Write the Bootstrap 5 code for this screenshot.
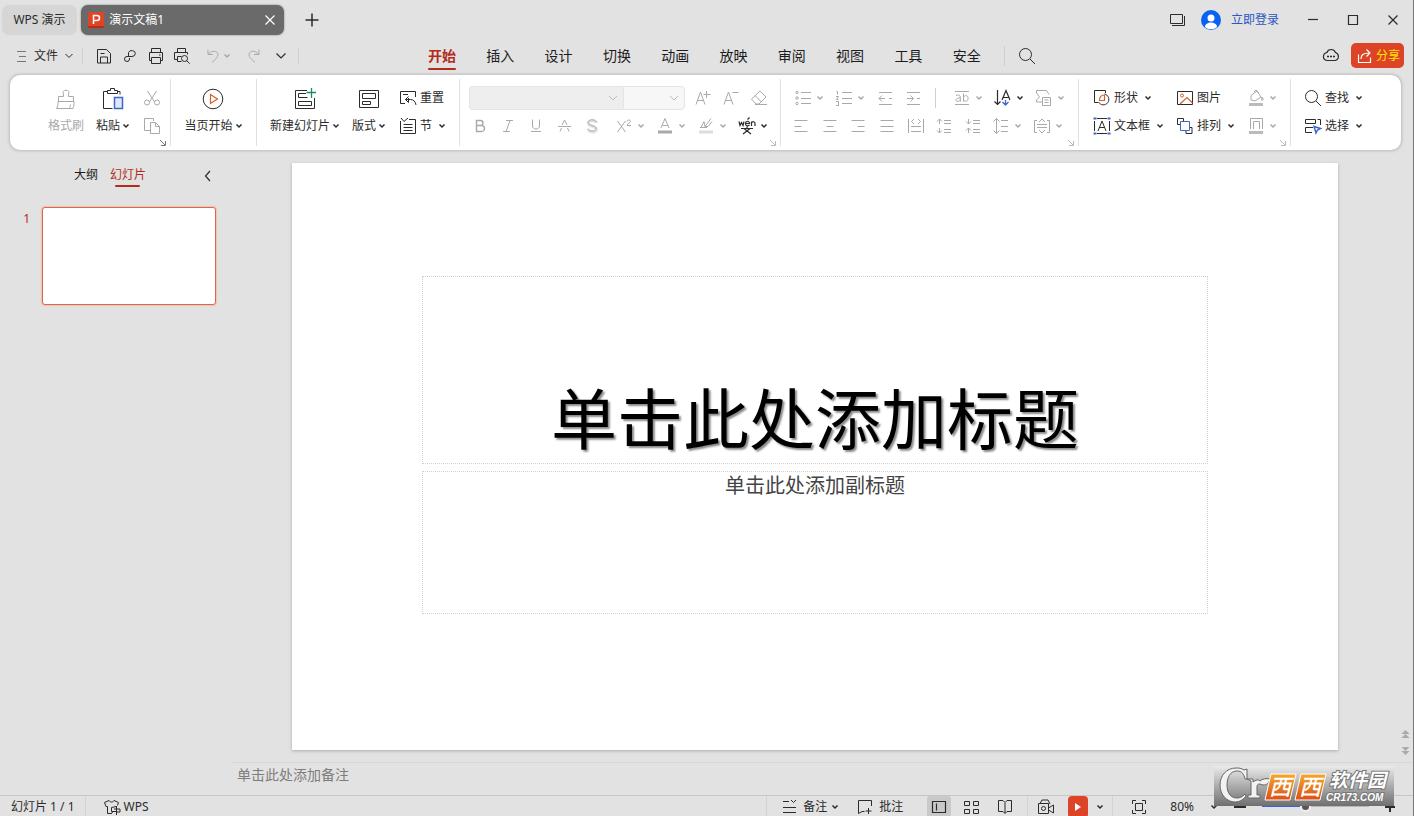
<!DOCTYPE html>
<html lang="zh-CN">
<head>
<meta charset="utf-8">
<meta name="viewport" content="width=device-width, initial-scale=1">
<title>WPS 演示</title>
<link href="https://cdn.jsdelivr.net/npm/bootstrap@5.3.0/dist/css/bootstrap.min.css" rel="stylesheet">
<style>
:root{--red:#b42b1a;--ink:#2b2b2b;--off:#a9a9a9;--face:#e2e2e2}
body{background:var(--face);color:#1c1c1c;font:12px/16px "Noto Sans","Noto Sans CJK SC",sans-serif;border-right:1px solid #777}
button,select{font:inherit}
a{color:inherit;text-decoration:none}
svg{flex:none;fill:none;stroke:currentColor;stroke-width:1}
.ic{width:20px;height:20px}
.cr{width:8px;height:8px;stroke-width:1.5}
.tb{display:inline-flex;align-items:center;justify-content:center;border:0;background:none;padding:0;color:var(--ink);height:28px;flex:none;white-space:nowrap}
.w26{width:26px}.w28{width:28px}.w40{width:40px}
.split{width:41px;justify-content:flex-start;gap:3px;padding-left:4px}
.off{color:var(--off)}
.line{width:1px;background:#cfcfcf;flex:none}
.h16{height:16px}.h20{height:20px}
.titlebar{height:40px;gap:4px;padding-left:2px}
.wtab{height:30px;border-radius:7px;background:#d6d6d6}
.wtab-home{width:75px}
.wtab-on{width:203px;background:#6a6a6a;color:#fff;box-shadow:0 0 2px #777;padding-left:7px}
.plus{margin-left:10px}
.login{color:#2b56c5;gap:10px;margin:0 10px 0 6px}
.menurow{height:30px;padding-top:1px;margin-bottom:2px}
.quick{width:413px}
.file{gap:6px}
.mtabs{width:583px}
.mtab{flex:1;height:28px;font-size:14px;line-height:20px;padding:4px 15px 0}
.mtab.on{color:var(--red);font-weight:700}
.mtab.on::after{content:"";display:block;height:2px;margin-top:2px;background:var(--red);border-radius:1px}
.share{width:53px;height:25px;border-radius:5px;background:#dd4327;color:#ffe600;gap:1px;margin:0 9px 0 6px}
.share svg{color:#fff}
.ribbon{margin:3px 12px 0 10px;height:75px;border-radius:10px;background:#fff;box-shadow:0 0 3px 1px #bbb}
.grp{position:relative;margin:4px 0;padding-top:5px;border-right:1px solid #e0e0e0;flex:none}
.grp:last-child{border:0}
.g1{width:161px;padding-left:38px}.g2{width:86px}.g3{width:203px;padding-left:13px}.g4{width:321px}.g5{width:298px}.g6{width:212px;padding-left:13px}.g7{padding-left:12px}
.fontrow{padding-left:9px}.pad6{padding-left:6px}
.aligns{width:200px}
.launch{position:absolute;right:3px;bottom:-1px;width:8px;height:8px;color:#777}
.launch.off{color:#bbb}
.big{display:inline-flex;flex-direction:column;align-items:center;height:56px;border:0;background:none;padding:0;color:var(--ink);white-space:nowrap}
.big>svg{width:22px;height:22px;margin:4px 0 2px}
.big>span{height:28px;display:flex;align-items:center;gap:2px}
.big.off{color:var(--off)}
.lab{justify-content:flex-start;gap:4px}
.tight{gap:2px}
.c1{width:83px}.c2{width:67px}
.combo{height:24px;border:1px solid #e4e4e4;border-radius:0 4px 4px 0;background:#f7f7f7 url("data:image/svg+xml,%3Csvg xmlns='http://www.w3.org/2000/svg' width='10' height='6'%3E%3Cpath d='M1 1l4 4 4-4' fill='none' stroke='%23bbb'/%3E%3C/svg%3E") no-repeat right 5px center;appearance:none;width:62px;opacity:1}
.combo.face{width:154px;border-radius:4px 0 0 4px;background-color:#eee;border-right:0}
.side{width:231px}
.sidehead{margin-top:17px;padding:0 9px 0 74px}
.stab{height:20px}
.stab.on{color:var(--red);margin-left:12px}
.stab.on::after{content:"";display:block;height:2px;margin:2px 6px 0 5px;background:var(--red);border-radius:1px}
.snum{width:42px;padding:4px 12px 0 0;color:var(--red)}
.thumb{width:174px;height:98px;border:1px solid #d9694a;border-radius:3px;background:#fff;box-shadow:0 0 1px 1px #edc4b6}
.slide{margin:13px 75px 12px 61px;padding:113px 130px 136px;background:#fff;box-shadow:0 1px 3px #aaa}
.ph{border:1px dotted #d2d2d2}
.ph-title{flex:188 1 0;font-size:66px;line-height:90px;color:#000;text-shadow:2px 2px 2px #8a8a8a}
.ph-sub{flex:143 1 0;font-size:20px;line-height:28px;color:#444;margin-top:7px}
.notes{height:33px;margin-left:231px;border-top:1px solid #d6d6d6;color:#7d7d7d;font-size:14px;line-height:24px;padding-left:6px}
.pager{position:absolute;right:3px;bottom:6px}
.status{height:21px;border-top:1px solid #c6c6c6}
.status .tb{height:22px}
.status .line{background:#d3d3d3}
.page{margin:0 10px 0 11px}
.view-on{width:24px;background:#c9c9c9;border-radius:3px 3px 0 0}
.views{gap:6px}
.play{width:20px;background:#dd4327;color:#fff;border-radius:4px}
.pct{gap:16px;margin-left:17px}
.zoombar{appearance:none;width:107px;height:12px;background:linear-gradient(90deg,#3b63d8 40%,#b8b8b8 40%) center/100% 2px no-repeat;margin:0}
.zoombar::-webkit-slider-thumb{appearance:none;width:11px;height:11px;border-radius:50%;background:#555;border:2px solid #eee}
.zin{margin:0 18px 0 16px}
.wmark{position:absolute;right:19px;bottom:10px;width:180px;height:40px;z-index:3}
.wmark text{stroke:none}
.wmark .edge{paint-order:stroke;stroke:#777;stroke-width:2px}
</style>
</head>
<body class="vh-100 overflow-hidden d-flex flex-column position-relative">
<svg class="d-none">
<symbol id="c" viewBox="0 0 8 8"><path d="M1.5 2.5L4 5l2.5-2.5"/></symbol>
<symbol id="launch" viewBox="0 0 8 8"><path d="M1 1l5 5M6.5 2v4.5H2"/></symbol>
<symbol id="save" viewBox="0 0 20 20"><path d="M3.500 3.500h9l4 4v9.500h-13zM6.500 17v-6h7v6M6.500 7.500h4"/></symbol>
<symbol id="pdf" viewBox="0 0 20 20"><path d="M8.500 11V6.500a3.500 3 0 1 1 3.500 4H7a2.500 2.500 0 1 0 2.500 2.500v-1"/></symbol>
<symbol id="print" viewBox="0 0 20 20"><path d="M5.500 6.500v-4h9v4M5.500 14.500h-2v-8h13v8h-2M5.500 11.500h9v6h-9zM13 9h1.500"/></symbol>
<symbol id="prev" viewBox="0 0 20 20"><path d="M5.500 6.500v-4h8v4M5.500 13.500h-3v-7h13v2M5.500 10.500h4M5.500 10.500v5h4"/><circle cx="12.500" cy="12.500" r="3"/><path d="M14.700 14.700l3 3"/></symbol>
<symbol id="undo" viewBox="0 0 20 20"><path d="M5 3.500v5h5M5.500 8c3-4 9-3.500 9.500.5 0 3-3 5-6 8"/></symbol>
<symbol id="redo" viewBox="0 0 20 20"><path d="M15 3.500v5h-5M14.500 8c-3-4-9-3.500-9.500.5 0 3 3 5 6 8"/></symbol>
<symbol id="search" viewBox="0 0 20 20"><circle cx="8.500" cy="8.500" r="6"/><path d="M13 13l5 5"/></symbol>
<symbol id="brush" viewBox="0 0 22 22"><path d="M1.500 20.500c1.500-2 1.500-4 1.500-7h16c0 3 0 4-1 7zM3.500 13V8.500h5V6c-3-5 8-5 5 0v2.500h5V13M13.500 20.500c1.500-1 2-2 2-4"/></symbol>
<symbol id="paste" viewBox="0 0 22 22"><path d="M5 3.500H1.500v17h9M15 3.500h3v3M5.500 5.500v-3h3v-2h4v2h3v3z"/><path d="M12.500 9.500h8v11h-8z" fill="#dfe8fb" stroke="#3f66c8" stroke-width="1.500"/></symbol>
<symbol id="cut" viewBox="0 0 20 20"><path d="M5.500 3l7 11M14.500 3l-7 11"/><circle cx="5" cy="14.500" r="2.500"/><circle cx="15" cy="14.500" r="2.500"/></symbol>
<symbol id="copy" viewBox="0 0 20 20"><path d="M8 14.500H2.500v-12h9V5M8.500 6.500h5l4 4v7h-9zM13.500 6.500v4h4"/></symbol>
<symbol id="start" viewBox="0 0 22 22"><circle cx="11" cy="11" r="9.800"/><path d="M8.500 6.500l7 4.500-7 4.500z" stroke="#d4602b" stroke-width="1.200"/></symbol>
<symbol id="new" viewBox="0 0 22 22"><path d="M13 2.500H1.500v18h19V10M12 5.500H4.500v4h9M4.500 13.500h13v4h-13z"/><path d="M17.500 0v10M12.500 4.500h10" stroke="#1e8c62" stroke-width="1.300"/></symbol>
<symbol id="layout" viewBox="0 0 22 22"><path d="M1.500 2.500h19v17h-19zM4.500 5.500h13v5h-13zM4.500 13.500h8v3h-8z"/></symbol>
<symbol id="reset" viewBox="0 0 20 20"><path d="M7 15.500H2.500v-12h15V9M5 6.500h5M10.500 10v4.500M7.500 11.500h5c3 0 5 2 5.500 5.500M10.500 8.500l-3 3 3 3"/></symbol>
<symbol id="sect" viewBox="0 0 20 20"><path d="M2.500 5v12.500h15v-14H11M3 2l3 3.500L10 2M5.500 8.500h9M5.500 11.500h9M5.500 14.500h9"/></symbol>
<symbol id="inc" viewBox="0 0 20 20"><path d="M3 16.500L7.500 4 12 16.500M4.500 12.500h6M13.500 3v7M10.500 6.500h7"/></symbol>
<symbol id="dec" viewBox="0 0 20 20"><path d="M3 16.500L7.500 4 12 16.500M4.500 12.500h6M11.500 4.500h6"/></symbol>
<symbol id="erase" viewBox="0 0 20 20"><path d="M2.500 11l8.500-8 6 6-7 7H7zM6 7.500l6.500 6.500M6 16.500h12"/></symbol>
<symbol id="b" viewBox="0 0 20 20"><path d="M6.500 4.500h4a2.500 2.500 0 0 1 0 5h-4zM6.500 9.500h5a3 3 0 0 1 0 6h-5z" stroke-width="1.400"/></symbol>
<symbol id="i" viewBox="0 0 20 20"><path d="M8 4.500h7M5 15.500h7M12 4.500l-4 11"/></symbol>
<symbol id="u" viewBox="0 0 20 20"><path d="M6.500 3.500V10c0 4 7 4 7 0V3.500M5 15.500h10"/></symbol>
<symbol id="st" viewBox="0 0 20 20"><path d="M4 10.500h13M8 9l2.500-5L13 9M7.500 12L6 15.500M13.500 12l1.500 3.500"/></symbol>
<symbol id="sh" viewBox="0 0 20 20"><path d="M14.500 7c0-3-8-3-8 .5s8 2.500 8 6-8 3-8 0" stroke="#e2e2e2" stroke-width="3"/><path d="M14 6c0-3-8-3-8 .5s8 2.500 8 6-8 3-8 0"/></symbol>
<symbol id="x2" viewBox="0 0 20 20"><path d="M3.500 5l8 11M11.500 5l-8 11M13 5.500c0-2 3.500-2 3.500 0 0 1.500-3.500 2-3.500 4h4"/></symbol>
<symbol id="fc" viewBox="0 0 20 20"><path d="M6 12l4-9.500 4 9.500M7.500 9.500h5"/><path d="M3 16h14" stroke-width="3"/></symbol>
<symbol id="hl" viewBox="0 0 20 20"><path d="M5 11.500l3-6 1 5 6-8M9 10.500h3l4-5M4 11.500h7"/><path d="M3 16h14" stroke="#ddd" stroke-width="3"/></symbol>
<symbol id="wen" viewBox="0 0 20 20"><path d="M2 5.500l1 4 1.500-3 1.500 3 1-4M8.500 7.500h4c0-3-4-3-4 0s2.500 2.500 4 1.500M10.500 3.500l2-2M14.500 10V5.500M14.500 7c1-2 3.500-1.500 3.500.5V10M4 12.500h12M10 10.500v2M7 12.500l7 5.500M13 12.500L6 18" stroke-width="1.200"/></symbol>
<symbol id="bul" viewBox="0 0 20 20"><path d="M8 4.500h10M8 10.500h10M8 15.500h10"/><circle cx="4" cy="4.500" r="1.200"/><circle cx="4" cy="10" r="1.200"/><circle cx="4" cy="15.500" r="1.200"/></symbol>
<symbol id="num" viewBox="0 0 20 20"><path d="M8 4.500h10M8 10.500h10M8 15.500h10M2.500 3.500h1v3M2 8.500h2.500l-2 3h2M2 13.500h2.500v4H2"/></symbol>
<symbol id="outd" viewBox="0 0 20 20"><path d="M4 4.500h13M4 16.500h13M4 10.500h6M14 10.500h3M7 7.500l-3 3 3 3"/></symbol>
<symbol id="ind" viewBox="0 0 20 20"><path d="M4 4.500h13M4 16.500h13M4 10.500h6M14 10.500h3M7.500 7.500l3 3-3 3"/></symbol>
<symbol id="ab" viewBox="0 0 20 20"><path d="M3 3.500h14M3 16.500h14M4 7.500c4-1.500 4.500 0 4.500 6M8.500 10c-5-.5-6 3.500-2.500 3.500l2.500-1.500M11.500 5.500v8M11.500 9c3-3 5-.5 4.500 2s-3 3-4.500 1"/></symbol>
<symbol id="dir" viewBox="0 0 20 20"><path d="M4.500 2v14M1.500 13.500l3 3 3-3M9 12l4-9.500L17 12M10 9.500h6" stroke-width="1.200"/><path d="M12.500 12v5M9.500 14l3 3 3-3" stroke="#3f66c8" stroke-width="1.300"/></symbol>
<symbol id="conv" viewBox="0 0 20 20"><path d="M8 14H2.500v-2l3-3-3-4V2.500h10l2.500 4M8.500 9.500h8v8h-8zM10.500 12h4M10.500 14.500h4"/></symbol>
<symbol id="al" viewBox="0 0 20 20"><path d="M3.500 4.500h13M3.500 10.500h7M3.500 15.500h13"/></symbol>
<symbol id="ac" viewBox="0 0 20 20"><path d="M3.500 4.500h13M6.500 10.500h7M3.500 15.500h13"/></symbol>
<symbol id="ar" viewBox="0 0 20 20"><path d="M3.500 4.500h13M9.500 10.500h7M3.500 15.500h13"/></symbol>
<symbol id="aj" viewBox="0 0 20 20"><path d="M3.500 4.500h13M3.500 10.500h13M3.500 15.500h13"/></symbol>
<symbol id="dist" viewBox="0 0 20 20"><path d="M2.500 3v14M17.500 3v14M5 10.500h10M5 15.500h10M8 3L5.500 5.500 8 8M12 3l2.500 2.500L12 8"/></symbol>
<symbol id="spi" viewBox="0 0 20 20"><path d="M10 4.500h7M10 7.500h7M10 13.500h7M10 16.500h7M5.500 3v5M3 5.500L5.500 3 8 5.500M5.500 12v5M3 14.500L5.500 17 8 14.500"/></symbol>
<symbol id="spd" viewBox="0 0 20 20"><path d="M10 4.500h7M10 7.500h7M10 13.500h7M10 16.500h7M5.500 3v5M3 5.500L5.500 8 8 5.500M5.500 12v5M3 14.500L5.500 12 8 14.500"/></symbol>
<symbol id="ls" viewBox="0 0 20 20"><path d="M10 4.500h7M10 10.500h7M10 15.500h7M5.500 3v14M2.500 5.500l3-3 3 3M2.500 14.500l3 3 3-3"/></symbol>
<symbol id="va" viewBox="0 0 20 20"><path d="M5 4.500H2.500v12H5M15 4.500h2.500v12H15M5 8.500h10M5 11.500h10M7 6l3-3 3 3M7 14l3 3 3-3"/></symbol>
<symbol id="shape" viewBox="0 0 20 20"><path d="M6 14.500H2.500v-12h11V5M6.500 14a5.500 5.500 0 1 0 6-8"/><path d="M7.500 12.500c0-4 2-5.500 5-5.500v5.500z" stroke="#d4602b" stroke-width="1.200"/></symbol>
<symbol id="pic" viewBox="0 0 20 20"><path d="M2.500 3.500h15v13h-15z"/><path d="M5 16l7-6.500 5.500 5.500" stroke="#d4602b" stroke-width="1.200"/><circle cx="7" cy="7.500" r="1.500" stroke="#d4602b"/></symbol>
<symbol id="bucket" viewBox="0 0 20 20"><path d="M5 7.500L11 3l4 6-6 4-4-1zM8 4l2-2 3 3M16 9c2 2 1 4-.5 3z"/><path d="M3 16.500h14" stroke-width="3" stroke="#bbb"/></symbol>
<symbol id="frame" viewBox="0 0 20 20"><path d="M4.500 13V2.500h12V13M7.500 13V5.500h6V13"/><path d="M3 16.500h14" stroke-width="3" stroke="#bbb"/></symbol>
<symbol id="tbox" viewBox="0 0 20 20"><path d="M2.500 5v10M17.500 5v10M6 15l4-10 4 10M7.500 11.500h5M5 2.500h10M5 17.500h10"/><path d="M1.500 2.500h3M15.500 2.500h3M1.500 17.500h3M15.500 17.500h3" stroke="#3f66c8" stroke-width="2"/></symbol>
<symbol id="arr" viewBox="0 0 20 20"><path d="M5 8.500H2.500v-6h6V5M11 15v2.500h6v-6H15"/><path d="M5.500 5.500h9v9h-9z" stroke="#3f66c8"/></symbol>
<symbol id="sel" viewBox="0 0 20 20"><path d="M17.500 9V3.500h-3M12.500 3.500v4M2.500 7.500h10M2.500 7.500v-4h10M9 16.500H2.500v-5H10"/><path d="M11 10.500l6.500 2-3 1.500-1.500 3z" stroke="#3f66c8" stroke-width="1.500"/></symbol>
<symbol id="x" viewBox="0 0 20 20"><path d="M5.500 5.500l9 9M14.500 5.500l-9 9" stroke-width="1.200"/></symbol>
</svg>

<header class="titlebar d-flex align-items-center flex-shrink-0">
  <button class="tb wtab wtab-home">WPS 演示</button>
  <div class="wtab wtab-on d-flex align-items-center">
    <svg width="16" height="16"><rect width="16" height="16" rx="2" fill="#e04426" stroke="none"/><path d="M0 14h16a2 2 0 0 1-2 2H2a2 2 0 0 1-2-2z" fill="#b92d16" stroke="none"/><path d="M5.500 12V3.500h3.500a2.500 2.500 0 0 1 0 5H5.500" stroke="#fff" stroke-width="1.500"/></svg>
    <span class="ms-1 me-auto">&hairsp;演示文稿1</span>
    <button class="tb w28 text-white" aria-label="关闭标签"><svg class="ic"><use href="#x"/></svg></button>
  </div>
  <button class="tb w28 plus" aria-label="新建"><svg width="14" height="14"><path d="M7 .5v13M.5 7h13" stroke-width="1.500"/></svg></button>
  <button class="tb w28 ms-auto" aria-label="窗口"><svg class="ic"><path d="M3.500 4.500h12v9h-12zM5 15.500h12.500V6"/></svg></button>
  <a href="#" class="login d-flex align-items-center text-nowrap"><svg width="20" height="20"><circle cx="10" cy="10" r="10" fill="#0a62f0" stroke="none"/><circle cx="10" cy="8" r="3.500" fill="#fff" stroke="none"/><path d="M4 17c0-6 12-6 12 0-3 3-9 3-12 0z" fill="#fff" stroke="none"/></svg><span>立即登录</span></a>
  <div class="d-flex">
  <button class="tb w40" aria-label="最小化"><svg class="ic"><path d="M5 9.500h10" stroke-width="1.200"/></svg></button>
  <button class="tb w40" aria-label="最大化"><svg class="ic"><path d="M5.500 5.500h9v9h-9z" stroke-width="1.200"/></svg></button>
  <button class="tb w40" aria-label="关闭"><svg class="ic"><use href="#x"/></svg></button>
  </div>
</header>

<nav class="menurow d-flex align-items-center flex-shrink-0">
  <div class="quick d-flex align-items-center flex-shrink-0 ps-3">
    <button class="tb file"><svg width="12" height="14"><path d="M1 2.500h9M3 7.500h7M1 12.500h9" stroke="#777"/></svg><span>文件</span><svg width="10" height="8"><path d="M1.500 2l3.500 3.500L8.500 2"/></svg></button>
    <span class="line h16 ms-2 ps-0 me-2"></span>
    <div class="d-flex ps-0">
      <button class="tb w26" aria-label="保存"><svg class="ic"><use href="#save"/></svg></button>
      <button class="tb w26" aria-label="输出为PDF"><svg class="ic"><use href="#pdf"/></svg></button>
      <button class="tb w26" aria-label="打印"><svg class="ic"><use href="#print"/></svg></button>
      <button class="tb w26" aria-label="打印预览"><svg class="ic"><use href="#prev"/></svg></button>
      <button class="tb off split ms-1 gap-0" aria-label="撤销"><svg class="ic"><use href="#undo"/></svg><svg class="cr"><use href="#c"/></svg></button>
      <button class="tb off w28" aria-label="恢复"><svg class="ic"><use href="#redo"/></svg></button>
      <button class="tb w26" aria-label="更多"><svg width="12" height="8"><path d="M1.500 1.500L6 6l4.500-4.500" stroke-width="1.200"/></svg></button>
    </div>
    <span class="line h16 ms-1"></span>
  </div>
  <div class="mtabs d-flex text-nowrap">
    <a href="#" class="mtab on">开始</a><a href="#" class="mtab">插入</a><a href="#" class="mtab">设计</a><a href="#" class="mtab">切换</a><a href="#" class="mtab">动画</a><a href="#" class="mtab">放映</a><a href="#" class="mtab">审阅</a><a href="#" class="mtab">视图</a><a href="#" class="mtab">工具</a><a href="#" class="mtab">安全</a>
  </div>
  <span class="line h20 ms-2 me-1"></span>
  <button class="tb w28 ms-1" aria-label="搜索"><svg class="ic"><use href="#search"/></svg></button>
  <button class="tb w28 ms-auto" aria-label="云"><svg class="ic"><path d="M6 6.500c1-4 7-4 8.500 0 4 1.500 4 7-.5 8H6c-5-1-4.500-7 0-8z" stroke-width="1.200"/><path d="M6 10.500h2M9 10.500h2M12 10.500h2" stroke-width="1.500"/></svg></button>
  <button class="tb share"><svg width="20" height="20"><path d="M3.500 8.500v8h12v-5M6 13c0-4 2-6 8-6M11.500 3.500L15 7l-3.500 3.500" stroke-width="1.200"/></svg><span>分享</span></button>
</nav>

<section class="ribbon d-flex flex-shrink-0">
  <div class="grp g1 d-flex">
    <button class="big off"><svg><use href="#brush"/></svg><span>格式刷</span></button>
    <button class="big ms-2 ps-1"><svg><use href="#paste"/></svg><span>粘贴<svg class="cr"><use href="#c"/></svg></span></button>
    <div class="d-flex flex-column ms-1 ps-1">
      <button class="tb w28 off" aria-label="剪切"><svg class="ic"><use href="#cut"/></svg></button>
      <button class="tb w28 off" aria-label="复制"><svg class="ic"><use href="#copy"/></svg></button>
    </div>
    <svg class="launch"><use href="#launch"/></svg>
  </div>
  <div class="grp g2 text-center"><button class="big"><svg><use href="#start"/></svg><span>当页开始<svg class="cr"><use href="#c"/></svg></span></button></div>
  <div class="grp g3 d-flex">
    <button class="big"><svg><use href="#new"/></svg><span>新建幻灯片<svg class="cr"><use href="#c"/></svg></span></button>
    <button class="big ms-2 ps-1"><svg><use href="#layout"/></svg><span>版式<svg class="cr"><use href="#c"/></svg></span></button>
    <div class="d-flex flex-column align-items-start ms-2 ps-1">
      <button class="tb lab tight"><svg class="ic"><use href="#reset"/></svg>重置</button>
      <button class="tb lab tight"><svg class="ic"><use href="#sect"/></svg>节<svg class="cr ms-1"><use href="#c"/></svg></button>
    </div>
  </div>
  <div class="grp g4">
    <div class="fontrow d-flex align-items-center">
      <select class="combo face" disabled aria-label="字体"><option></option></select><select class="combo" disabled aria-label="字号"><option></option></select>
      <button class="tb off w28 ms-1" aria-label="增大字号"><svg class="ic"><use href="#inc"/></svg></button><button class="tb off w28" aria-label="减小字号"><svg class="ic"><use href="#dec"/></svg></button><button class="tb off w28" aria-label="清除格式"><svg class="ic"><use href="#erase"/></svg></button>
    </div>
    <div class="d-flex pad6">
      <button class="tb off w28" aria-label="加粗"><svg class="ic"><use href="#b"/></svg></button><button class="tb off w28" aria-label="倾斜"><svg class="ic"><use href="#i"/></svg></button><button class="tb off w28" aria-label="下划线"><svg class="ic"><use href="#u"/></svg></button><button class="tb off w28" aria-label="删除线"><svg class="ic"><use href="#st"/></svg></button><button class="tb off w28" aria-label="阴影"><svg class="ic"><use href="#sh"/></svg></button>
      <button class="tb off split ms-1" aria-label="上标"><svg class="ic"><use href="#x2"/></svg><svg class="cr"><use href="#c"/></svg></button><button class="tb off split" aria-label="字体颜色"><svg class="ic"><use href="#fc"/></svg><svg class="cr"><use href="#c"/></svg></button><button class="tb off split" aria-label="突出显示"><svg class="ic"><use href="#hl"/></svg><svg class="cr"><use href="#c"/></svg></button><button class="tb split" aria-label="拼音"><svg class="ic"><use href="#wen"/></svg><svg class="cr"><use href="#c"/></svg></button>
    </div>
    <svg class="launch off"><use href="#launch"/></svg>
  </div>
  <div class="grp g5">
    <div class="d-flex align-items-center ps-2">
      <button class="tb off split" aria-label="项目符号"><svg class="ic"><use href="#bul"/></svg><svg class="cr"><use href="#c"/></svg></button><button class="tb off split" aria-label="编号"><svg class="ic"><use href="#num"/></svg><svg class="cr"><use href="#c"/></svg></button><button class="tb off w28" aria-label="减少缩进"><svg class="ic"><use href="#outd"/></svg></button><button class="tb off w28" aria-label="增加缩进"><svg class="ic"><use href="#ind"/></svg></button>
      <span class="line h20 ms-2 me-2"></span>
      <button class="tb off split ms-1" aria-label="文字间距"><svg class="ic"><use href="#ab"/></svg><svg class="cr"><use href="#c"/></svg></button><button class="tb split" aria-label="文字方向"><svg class="ic"><use href="#dir"/></svg><svg class="cr"><use href="#c"/></svg></button><button class="tb off split" aria-label="转换"><svg class="ic"><use href="#conv"/></svg><svg class="cr"><use href="#c"/></svg></button>
    </div>
    <div class="d-flex pad6">
      <div class="aligns d-flex justify-content-between">
      <button class="tb off w28" aria-label="左对齐"><svg class="ic"><use href="#al"/></svg></button><button class="tb off w28" aria-label="居中"><svg class="ic"><use href="#ac"/></svg></button><button class="tb off w28" aria-label="右对齐"><svg class="ic"><use href="#ar"/></svg></button><button class="tb off w28" aria-label="两端对齐"><svg class="ic"><use href="#aj"/></svg></button><button class="tb off w28" aria-label="分散对齐"><svg class="ic"><use href="#dist"/></svg></button><button class="tb off w28" aria-label="增加段距"><svg class="ic"><use href="#spi"/></svg></button><button class="tb off w28" aria-label="减少段距"><svg class="ic"><use href="#spd"/></svg></button>
      </div>
      <button class="tb off split" aria-label="行距"><svg class="ic"><use href="#ls"/></svg><svg class="cr"><use href="#c"/></svg></button><button class="tb off split" aria-label="对齐文本"><svg class="ic"><use href="#va"/></svg><svg class="cr"><use href="#c"/></svg></button>
    </div>
    <svg class="launch off"><use href="#launch"/></svg>
  </div>
  <div class="grp g6 d-flex">
    <div class="c1 d-flex flex-column align-items-start">
      <button class="tb lab tight"><svg class="ic"><use href="#shape"/></svg>形状<svg class="cr ms-1"><use href="#c"/></svg></button>
      <button class="tb lab tight"><svg class="ic"><use href="#tbox"/></svg>文本框<svg class="cr ms-1"><use href="#c"/></svg></button>
    </div>
    <div class="c2 d-flex flex-column align-items-start">
      <button class="tb lab tight"><svg class="ic"><use href="#pic"/></svg>图片</button>
      <button class="tb lab tight"><svg class="ic"><use href="#arr"/></svg>排列<svg class="cr ms-1"><use href="#c"/></svg></button>
    </div>
    <div class="d-flex flex-column">
      <button class="tb off split" aria-label="填充"><svg class="ic"><use href="#bucket"/></svg><svg class="cr"><use href="#c"/></svg></button>
      <button class="tb off split" aria-label="轮廓"><svg class="ic"><use href="#frame"/></svg><svg class="cr"><use href="#c"/></svg></button>
    </div>
    <svg class="launch off"><use href="#launch"/></svg>
  </div>
  <div class="grp g7 d-flex flex-column align-items-start">
    <button class="tb lab tight"><svg class="ic"><use href="#search"/></svg>查找<svg class="cr ms-1"><use href="#c"/></svg></button>
    <button class="tb lab tight"><svg class="ic"><use href="#sel"/></svg>选择<svg class="cr ms-1"><use href="#c"/></svg></button>
  </div>
</section>

<main class="d-flex flex-grow-1 overflow-hidden">
  <aside class="side flex-shrink-0">
    <div class="sidehead d-flex align-items-center">
      <a href="#" class="stab">大纲</a><a href="#" class="stab on">幻灯片</a>
      <button class="tb w28 h20 ms-auto" aria-label="收起"><svg class="ic"><path d="M12 4L7.500 9l4.500 5" stroke-width="1.200"/></svg></button>
    </div>
    <div class="d-flex mt-3 pt-1">
      <span class="snum text-end">1</span>
      <div class="thumb"></div>
    </div>
  </aside>
  <section class="flex-grow-1 d-flex position-relative">
    <article class="slide flex-grow-1 d-flex flex-column">
      <div class="ph ph-title d-flex align-items-end justify-content-center text-nowrap">单击此处添加标题</div>
      <div class="ph ph-sub text-center">单击此处添加副标题</div>
    </article>
    <svg class="pager" width="9" height="26"><path d="M4.500 0l4 4h-8zM4.500 4l4 4h-8zM.5 17h8l-4 4zM.5 21h8l-4 4z" fill="#aaa" stroke="none"/></svg>
  </section>
</main>
<div class="notes flex-shrink-0">单击此处添加备注</div>

<footer class="status d-flex flex-shrink-0">
  <button class="tb page">幻灯片 1 / 1</button>
  <span class="line"></span>
  <button class="tb ms-3 tight"><svg class="ic"><path d="M9 16.500H5.500v-7H4L2.500 5.500 7 3.500c1 2 4 2 5 0l4.500 2-1 3M9.500 10.500l5-1v5h-5zM14.500 9v9M11 14.500L9 17M12 12h6v3h-3"/></svg>WPS</button>
  <span class="line ms-auto"></span>
  <button class="tb ms-2 ps-1"><svg class="ic"><path d="M4 4.500h6M12 3l2.500 2.500L17 3M4 10.500h13M4 15.500h13"/></svg><span class="ms-1">备注</span><svg class="cr ms-1"><use href="#c"/></svg></button>
  <button class="tb ms-3"><svg class="ic"><path d="M9.500 14.500H7l-3.500 2v-13h13V9M13.500 11v6M10.500 14h6"/></svg><span class="ms-1">批注</span></button>
  <div class="views d-flex ms-4">
  <button class="tb view-on" aria-label="普通视图"><svg class="ic"><path d="M3.500 4.500h13v11h-13zM7.500 6.500v7" stroke-width="1.200"/></svg></button>
  <button class="tb w28" aria-label="幻灯片浏览"><svg class="ic"><path d="M3.500 4.500h5v4h-5zM12.500 4.500h5v4h-5zM3.500 12.500h5v4h-5zM12.500 12.500h5v4h-5z"/></svg></button>
  <button class="tb w28" aria-label="阅读视图"><svg class="ic"><path d="M10 16.500l-2-2H3.500v-11H8l2 2 2-2h4.500v11H12zM10 6v10"/></svg></button>
  </div>
  <span class="line ms-2"></span>
  <button class="tb w28 ms-1" aria-label="录制"><svg class="ic"><path d="M2.500 16.500v-10h10v10zM12.500 11l5-3v8l-5-3M4 6.500L6 3h6l2 4"/><circle cx="7.500" cy="11.500" r="2"/></svg></button>
  <button class="tb play ms-2" aria-label="放映"><svg width="10" height="10"><path d="M2 1l6 4-6 4z" fill="#fff" stroke="none"/></svg></button>
  <button class="tb ms-2" aria-label="放映选项"><svg class="cr"><use href="#c"/></svg></button>
  <span class="line ms-2 ps-0 me-2"></span>
  <button class="tb w28 ms-1" aria-label="适应窗口"><svg class="ic"><path d="M3.500 7V3.500H7M13 3.500h3.500V7M16.500 13v3.500H13M7 16.500H3.500V13M6.500 6.500h7v7h-7z"/></svg></button>
  <button class="tb pct">80%<svg class="cr"><use href="#c"/></svg></button>
  <button class="tb ms-3 me-3" aria-label="缩小"><svg width="12" height="12"><path d="M0 6h12" stroke-width="2"/></svg></button>
  <input type="range" class="zoombar align-self-center" value="40" aria-label="缩放">
  <button class="tb zin" aria-label="放大"><svg width="10" height="10"><path d="M5 0v10M0 5h10" stroke-width="2"/></svg></button>
</footer>

<svg class="wmark" viewBox="0 0 180 40" aria-label="西西软件园">
<defs><linearGradient id="wg" x2="0" y2="1"><stop stop-color="#eaeaea"/><stop offset="1" stop-color="#6f6f6f"/></linearGradient><linearGradient id="og" x2="0" y2="1"><stop stop-color="#f4a92c"/><stop offset="1" stop-color="#dd4f16"/></linearGradient></defs>
<path d="M0 0h180v40H0z" fill="url(#wg)" stroke="none"/>
<path fill="#f2f2f2" stroke="#666" d="M33 13V3l-3 1C27 2 25 2 22 2 12 2 6 10 6 19c0 10 7 17 15 17 5 0 9-3 11-6l-1-2c-3 3-5 4-8 4-7 0-10-6-10-13S16 5 23 5c5 0 7 3 8 8h2l4 2v14h-3v3h12v-3h-3V20c1-3 3-2 6-1 4 0 6-2 7-6-4-1-8 0-10 2-2-2-4-1-7 1v-3z"/>
<path fill="url(#og)" stroke="#fff" d="M57 8h25l-6 26H51zM87 8h25l-6 26H81z"/>
<g fill="#fff" font-family="'Noto Sans CJK SC',sans-serif" font-style="italic" font-weight="500"><text x="55" y="29" font-size="22">西</text><text x="85" y="29" font-size="22">西</text><text x="115" y="21" font-size="19" font-weight="700" class="edge">软件园</text><text x="112" y="35" font-size="10" font-weight="700" font-family="'Liberation Sans',sans-serif" class="edge">CR173.COM</text></g>
</svg>
<script src="https://cdn.jsdelivr.net/npm/bootstrap@5.3.0/dist/js/bootstrap.bundle.min.js"></script>
</body>
</html>
